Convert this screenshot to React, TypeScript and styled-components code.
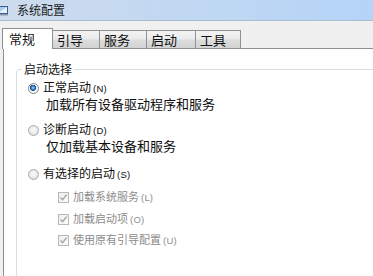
import React from 'react';
import styled, { createGlobalStyle } from 'styled-components';

const GlobalStyle = createGlobalStyle`
  html, body {
    margin: 0;
    padding: 0;
    background: #f0f0f0;
    overflow: hidden;
  }
  body {
    font-family: 'Noto Sans CJK SC', 'Noto Sans', sans-serif;
  }
`;

const Window = styled.div`
  width: 373px;
  height: 276px;
  display: flex;
  flex-direction: column;
  background: #f0f0f0;
  overflow: hidden;
`;

const TitleBar = styled.div`
  height: 20px;
  flex-shrink: 0;
  display: flex;
  align-items: center;
  gap: 8px;
  background: linear-gradient(to right, #cedced 0%, #c2d8f1 45%, #b4d4f8 100%);
  border-bottom: 1px solid #a8bcd2;
  color: #1b1b1b;
  font-size: 12px;
  line-height: 20px;
`;

const TabStrip = styled.div`
  height: 27px;
  flex-shrink: 0;
  display: flex;
  align-items: flex-end;
  padding-left: 2px;
  box-sizing: border-box;
  position: relative;
  z-index: 1;
`;

const Tab = styled.div<{ $active?: boolean; $width: number }>`
  width: ${(p) => p.$width}px;
  height: ${(p) => (p.$active ? 21 : 18)}px;
  margin-bottom: ${(p) => (p.$active ? -1 : 0)}px;
  box-sizing: border-box;
  display: flex;
  align-items: center;
  padding-left: ${(p) => (p.$active ? 6 : 4)}px;
  border: 1px solid #8d9096;
  border-bottom: none;
  border-left: ${(p) => (p.$active ? '1px solid #8d9096' : 'none')};
  background: ${(p) => (p.$active ? '#ffffff' : 'linear-gradient(to bottom, #f3f3f3 0%, #ebebeb 45%, #dcdcdc 55%, #d3d3d3 100%)')};
  color: #111;
  font-size: 13px;
  line-height: 16px;
`;

const Panel = styled.div`
  flex: 1;
  margin-left: 3px;
  background: #ffffff;
  border-top: 1px solid #8d9096;
  border-left: 1px solid #8d9096;
`;

const GroupBox = styled.fieldset`
  width: 420px;
  margin: 12px 0 0 12px;
  padding: 0;
  box-sizing: border-box;
  border: 1px solid #d5dfe5;
  border-radius: 3px;
  min-width: 0;
`;

const GroupLabel = styled.legend`
  margin-left: 5px;
  padding: 0 2px;
  font-size: 12px;
  line-height: 16px;
  color: #111;
`;

const OptionList = styled.div`
  display: flex;
  flex-direction: column;
  padding: 3px 0 40px 11px;
`;

const Row = styled.div<{ $top?: number; $indent?: number; $disabled?: boolean }>`
  display: flex;
  align-items: center;
  gap: 4px;
  height: 16px;
  margin-top: ${(p) => p.$top ?? 0}px;
  padding-left: ${(p) => p.$indent ?? 0}px;
  color: ${(p) => (p.$disabled ? '#8c8c8c' : '#0d0d0d')};
  font-size: ${(p) => (p.$disabled ? 11 : 12)}px;
  line-height: 16px;
  white-space: nowrap;
`;

const Desc = styled.div`
  height: 16px;
  padding-left: 18px;
  font-size: 13px;
  line-height: 16px;
  color: #0d0d0d;
  white-space: nowrap;
`;

const Accel = styled.span`
  margin-left: 2px;
  font-family: 'Liberation Sans', 'DejaVu Sans', sans-serif;
  font-size: 9.5px;
  letter-spacing: 0.2px;
`;

const RadioDot = styled.span<{ $checked?: boolean }>`
  width: 11px;
  height: 11px;
  flex-shrink: 0;
  box-sizing: border-box;
  border-radius: 50%;
  border: 1px solid ${(p) => (p.$checked ? '#7e8388' : '#a9abad')};
  background: ${(p) =>
    p.$checked
      ? 'radial-gradient(circle at 45% 42%, #a8dcff 0, #3b8ad6 22%, #17458a 40%, #f2f2f2 46%, #ffffff 62%, #cfcfcf 100%)'
      : 'radial-gradient(circle at 50% 45%, #fbfbfb 0, #eeeeee 45%, #d2d2d2 100%)'};
`;

const CheckBox = styled.span`
  width: 11px;
  height: 11px;
  flex-shrink: 0;
  box-sizing: border-box;
  border: 1px solid #b9b9b9;
  background: linear-gradient(135deg, #eeeeee 0%, #fbfbfb 100%);
  display: flex;
  align-items: center;
  justify-content: center;
`;

const AppIcon = () => (
  <svg width="9" height="11" viewBox="0 0 9 11">
    <rect x="-3" y="1" width="11" height="8" fill="#3d5f8f" />
    <rect x="-2" y="2" width="9" height="6" fill="#a9cdf0" />
    <path d="M-2 8 L7 2 L7 8 Z" fill="#e9f3fb" />
    <rect x="-3" y="9" width="11" height="1.5" fill="#8a97a6" />
  </svg>
);

const Tick = () => (
  <svg width="9" height="9" viewBox="0 0 9 9">
    <path d="M1.5 4.6 L3.6 6.8 L7.6 1.6" fill="none" stroke="#a3a3a3" strokeWidth="1.4" />
  </svg>
);

const tabs = [
  { label: '常规', width: 51, active: true },
  { label: '引导', width: 47 },
  { label: '服务', width: 47 },
  { label: '启动', width: 49 },
  { label: '工具', width: 45 },
];

const RadioOption = ({ checked, label, accel, top }: { checked?: boolean; label: string; accel: string; top?: number }) => (
  <Row $top={top}>
    <RadioDot $checked={checked} />
    <span>
      {label}
      <Accel>({accel})</Accel>
    </span>
  </Row>
);

const CheckOption = ({ label, accel, top }: { label: string; accel: string; top: number }) => (
  <Row $top={top} $indent={30} $disabled>
    <CheckBox>
      <Tick />
    </CheckBox>
    <span>
      {label}
      <Accel>({accel})</Accel>
    </span>
  </Row>
);

export default function App() {
  return (
    <Window>
      <GlobalStyle />
      <TitleBar>
        <AppIcon />
        <span>系统配置</span>
      </TitleBar>
      <TabStrip>
        {tabs.map((t) => (
          <Tab key={t.label} $active={t.active} $width={t.width}>
            {t.label}
          </Tab>
        ))}
      </TabStrip>
      <Panel>
        <GroupBox>
          <GroupLabel>启动选择</GroupLabel>
          <OptionList>
            <RadioOption checked label="正常启动" accel="N" />
            <Desc>加载所有设备驱动程序和服务</Desc>
            <RadioOption label="诊断启动" accel="D" top={10} />
            <Desc>仅加载基本设备和服务</Desc>
            <RadioOption label="有选择的启动" accel="S" top={12} />
            <CheckOption label="加载系统服务" accel="L" top={7} />
            <CheckOption label="加载启动项" accel="O" top={6} />
            <CheckOption label="使用原有引导配置" accel="U" top={5} />
          </OptionList>
        </GroupBox>
      </Panel>
    </Window>
  );
}
